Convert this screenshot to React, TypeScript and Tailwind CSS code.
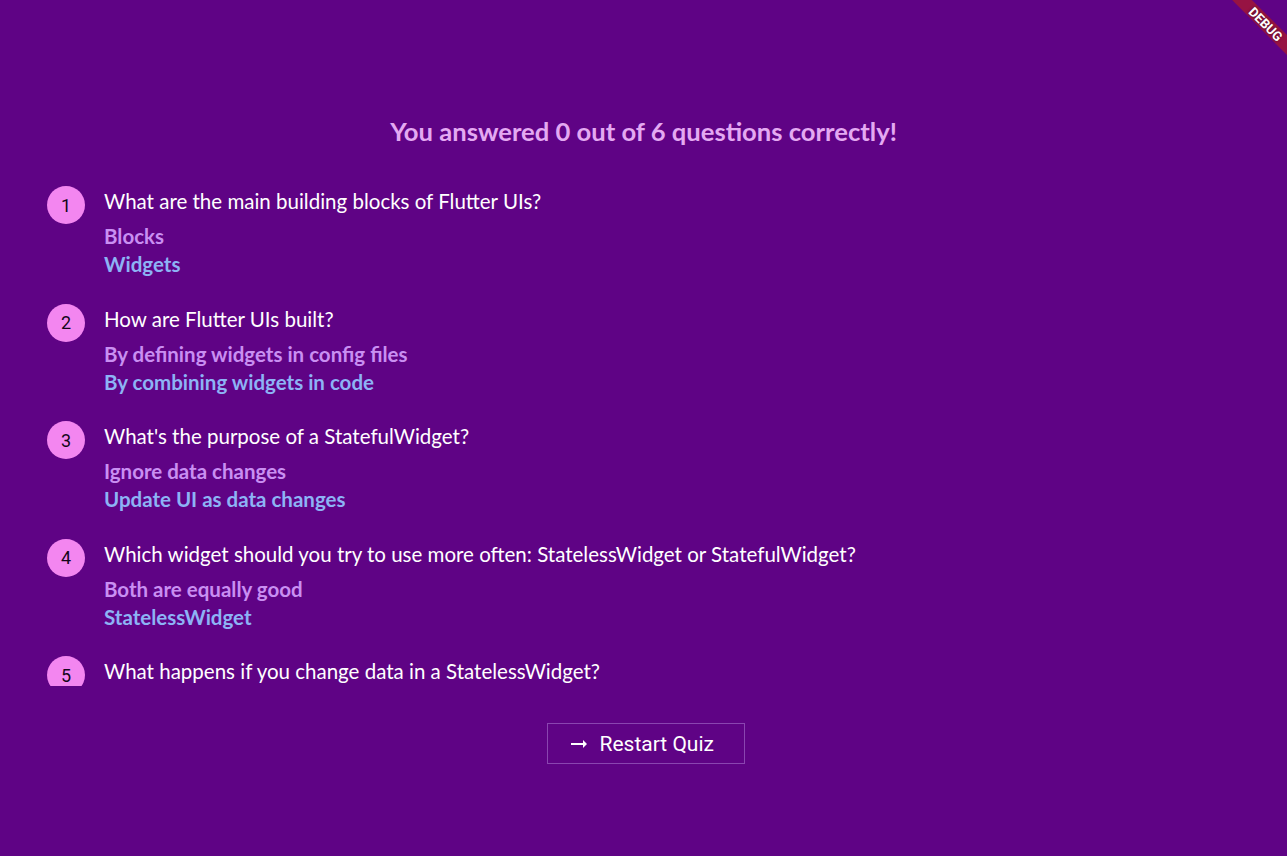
import React from "react";

const data = [
  { q: "What are the main building blocks of Flutter UIs?", a: "Blocks", c: "Widgets" },
  { q: "How are Flutter UIs built?", a: "By defining widgets in config files", c: "By combining widgets in code" },
  { q: "What's the purpose of a StatefulWidget?", a: "Ignore data changes", c: "Update UI as data changes" },
  { q: "Which widget should you try to use more often: StatelessWidget or StatefulWidget?", a: "Both are equally good", c: "StatelessWidget" },
  { q: "What happens if you change data in a StatelessWidget?", a: "The UI is not updated", c: "The UI is updated" },
  { q: "How should you update data inside of StatefulWidgets?", a: "By calling updateData()", c: "By calling setState()" },
];

export default function App() {
  return (
    <div className="relative h-[856px] w-full overflow-hidden bg-[#5f0385]">
      <div className="flex flex-col items-center pt-[117px]">
        <h1
          className="text-[25.6px] leading-[29px] font-bold text-[#e4a9f2] text-center"
          style={{ fontFamily: "Lato, 'Noto Sans', sans-serif" }}
        >
          You answered 0 out of 6 questions correctly!
        </h1>
        <div className="mt-[40px] h-[500px] w-full overflow-hidden pl-[47px]">
          {data.map((d, i) => (
            <div key={i} className="flex h-[117.5px] items-start">
              <div
                className="flex h-[38px] w-[38px] shrink-0 items-center justify-center rounded-full bg-[#f386f0] text-[18px] text-[#14061a]"
                style={{ fontFamily: "Roboto, sans-serif" }}
              >
                {i + 1}
              </div>
              <div className="ml-[19px] flex flex-col" style={{ fontFamily: "Lato, 'Noto Sans', sans-serif" }}>
                <p className="mt-[3px] text-[20.5px] leading-[24px] text-white">{d.q}</p>
                <p className="mt-[9px] text-[20.5px] leading-[28px] font-bold text-[#c98ff2]">{d.a}</p>
                <p className="text-[20.5px] leading-[28px] font-bold text-[#8db3f5]">{d.c}</p>
              </div>
            </div>
          ))}
        </div>
        <button
          className="ml-[4px] mt-[37px] flex h-[41px] w-[198px] items-center gap-[9px] border border-[#8a45b0] pl-[19px] text-white"
          style={{ fontFamily: "Roboto, sans-serif" }}
        >
          <svg width="24" height="24" viewBox="0 0 24 24" fill="white">
            <path d="M16.01 11H4v2h12.01v3L20 12l-3.99-4z" />
          </svg>
          <span className="text-[21px] leading-[24px]">Restart Quiz</span>
        </button>
      </div>
      <div className="pointer-events-none absolute right-[-29px] top-[17px] flex h-[14px] w-[100px] rotate-45 items-center justify-center bg-[rgba(183,28,28,0.63)]">
        <span
          className="text-[13px] font-bold leading-none text-white"
          style={{ fontFamily: "Roboto, sans-serif", textShadow: "0 0 3px rgba(0,0,0,0.5)" }}
        >
          DEBUG
        </span>
      </div>
    </div>
  );
}
